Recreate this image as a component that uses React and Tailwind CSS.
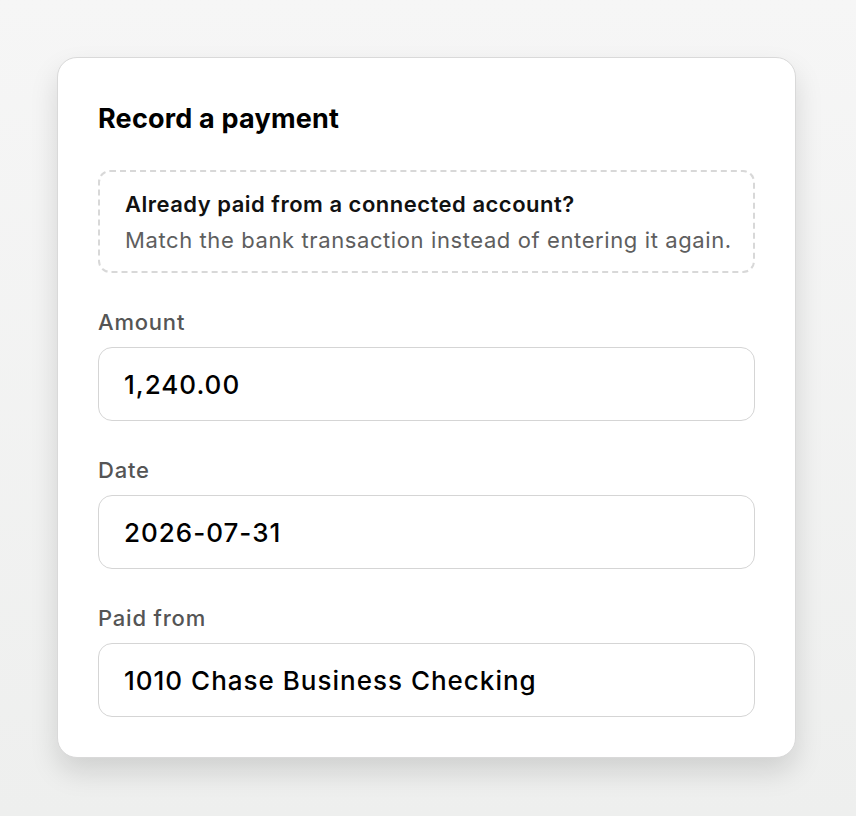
const fields = [
  { label: "Amount", value: "1,240.00" },
  { label: "Date", value: "2026-07-31" },
  { label: "Paid from", value: "1010 Chase Business Checking" },
];

export default function App() {
  return (
    <div
      className="min-h-[816px] bg-gradient-to-b from-[#f6f6f6] to-[#eeefee] pt-[57px] px-[57px] pb-[58px]"
      style={{ fontFamily: "Inter, 'Noto Sans', sans-serif" }}
    >
      <div className="w-[739px] rounded-[20px] border border-[#d9d9d9] bg-white px-10 pt-[41px] pb-10 shadow-[0_14px_28px_rgba(0,0,0,0.13)]">
        <h2 className="text-[27px] leading-[40px] font-bold tracking-[0.2px] text-black">Record a payment</h2>

        {/* hint box */}
        <div className="mt-[31px] rounded-[12px] border-2 border-dashed border-[#d8d8d8] px-[25px] pt-[14px] pb-[13px]">
          <p className="whitespace-nowrap text-[22px] leading-[36px] font-semibold tracking-[0.5px] text-[#111]">Already paid from a connected account?</p>
          <p className="whitespace-nowrap text-[22px] leading-[36px] tracking-[0.6px] text-[#5e5e5e]">Match the bank transaction instead of entering it again.</p>
        </div>

        <div className="mt-[33px] flex flex-col gap-[33px]">
          {fields.map((f) => (
            <div key={f.label} className="flex flex-col gap-[9px]">
              <label className="text-[22px] leading-[32px] font-medium tracking-[0.8px] text-[#555]">{f.label}</label>
              <div className="h-[74px] rounded-[14px] border-[1.5px] border-[#d5d5d5] bg-white px-[25px] flex items-center">
                <span className="text-[26px] font-medium tracking-[1px] text-black">{f.value}</span>
              </div>
            </div>
          ))}
        </div>
      </div>
    </div>
  );
}
